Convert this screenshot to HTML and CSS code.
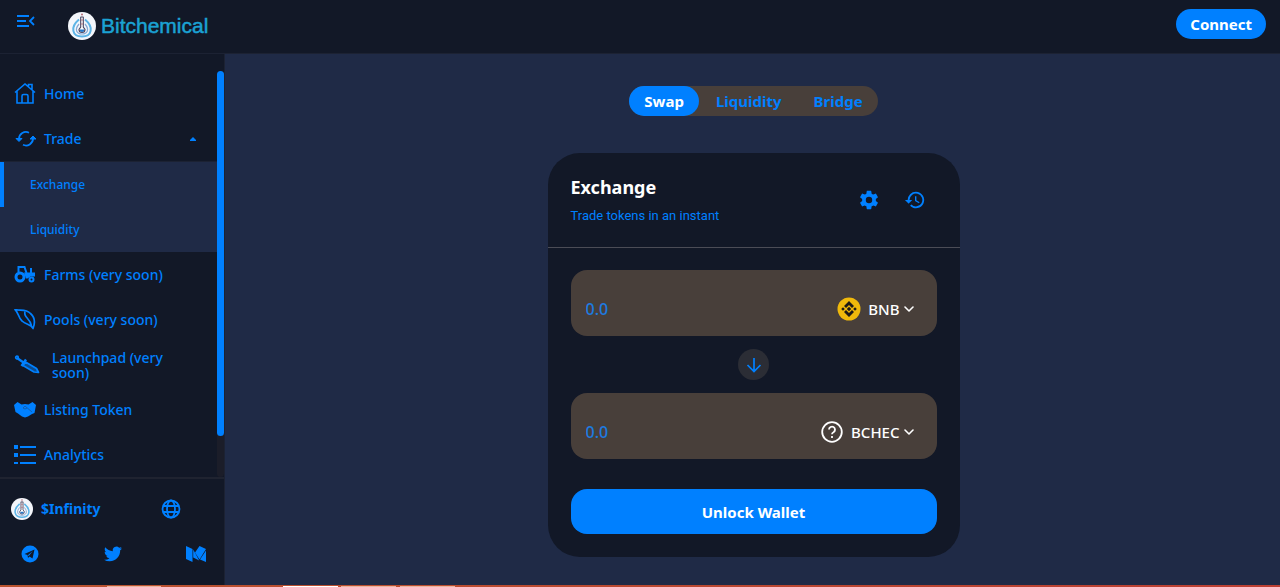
FILE: index.html
```html
<!DOCTYPE html>
<html lang="en">
<head>
  <meta charset="UTF-8" />
  <meta name="viewport" content="width=device-width, initial-scale=1.0" />
  <title>Bitchemical</title>
  <link rel="stylesheet" href="styles.css">
</head>

<body>
  <svg class="sprite" width="0" height="0" aria-hidden="true">
    <defs>
      <symbol id="flask" viewBox="0 0 28 28">
        <circle cx="14" cy="14" r="14" fill="#f4f6fb" />
        <path d="M11 7.500C2 15 4 24.500 14 24.500S26 15 17 7.500" fill="none" stroke="#5db4e6" stroke-width="2" />
        <path d="M11 12C6 18 9 22 14 22S22 18 17 12" fill="none" stroke="#86a9d4" stroke-width="1.200" />
        <path d="M12.500 5h3M12.700 5v10l-1.700 2.500q0 3 3 3t3-3L15.300 15V5" fill="#fff" stroke="#4a4560" stroke-width="1.100" />
        <path d="M12 17.500h4v1.500q-2 2-4 0z" fill="#2678c8" />
        <circle cx="14" cy="2.500" r="1" fill="#b66b77" />
        <circle cx="14" cy="8" r=".8" fill="#b66b77" />
        <circle cx="14" cy="12" r=".8" fill="#b66b77" />
      </symbol>
      <symbol id="chevron" viewBox="0 0 10 6">
        <path d="M1 1l4 4 4-4" fill="none" stroke="currentColor" stroke-width="1.600" stroke-linecap="round" stroke-linejoin="round" />
      </symbol>
    </defs>
  </svg>

  <header class="topbar">
    <button class="icon-btn menu-toggle" aria-label="Toggle menu">
      <svg width="18" height="14" viewBox="0 0 18 14" fill="none" stroke="currentColor" stroke-width="1.800">
        <path d="M0 2h12M0 7h9M0 12h12M17 3l-4 4 4 4" />
      </svg>
    </button>
    <a class="brand" href="#">
      <svg width="28" height="28"><use href="#flask" /></svg>
      <span>Bitchemical</span>
    </a>
    <button class="connect">Connect</button>
  </header>

  <div class="layout">
    <aside class="sidebar">
      <div class="menu-area">
        <nav class="menu">
          <a class="menu-item" href="#">
            <svg width="22" height="22" viewBox="0 0 22 22" fill="none" stroke="currentColor" stroke-width="1.600">
              <path d="M1 9.500L11 1l10 8.500M3 8v12h16V8M14.500 4V1.500h3.500V7M8 20v-7q0-1.500 1.500-1.500h3q1.500 0 1.500 1.500v7" />
            </svg>
            Home
          </a>
          <a class="menu-item" href="#">
            <svg width="22" height="22" viewBox="0 0 22 22" fill="none" stroke="currentColor" stroke-width="1.800">
              <path d="M5 11a7 7 0 0 1 10-6.300M19 10.500a7 7 0 0 1-10 6.300" />
              <path d="M2 10.500h6L5 13.500zM16 11h6l-3-3z" fill="currentColor" stroke-width="1" stroke-linejoin="round" />
            </svg>
            Trade
            <svg class="caret" width="6" height="4" viewBox="0 0 6 4"><path d="M0 4V3l3-3 3 3v1z" fill="currentColor" /></svg>
          </a>
          <div class="submenu">
            <a class="submenu-item active" href="#">Exchange</a>
            <a class="submenu-item" href="#">Liquidity</a>
          </div>
          <a class="menu-item" href="#">
            <svg width="22" height="22" viewBox="0 0 22 22" fill="none" stroke="currentColor">
              <circle cx="6" cy="13" r="4" stroke-width="3" />
              <circle cx="17.500" cy="15.500" r="2" stroke-width="2" />
              <path d="M4.500 8V3h6l2 6" stroke-width="2" />
              <path d="M10 8.500h11v4h-4.500l-3 2H12z" fill="currentColor" stroke="none" />
              <path d="M17 9V4" stroke-width="2" />
            </svg>
            Farms (very soon)
          </a>
          <a class="menu-item" href="#">
            <svg width="22" height="22" viewBox="0 0 22 22" fill="none" stroke="currentColor" stroke-width="1.700" stroke-linejoin="round">
              <path d="M1 0.500C6 2 12-.5 16.500 4.500c4.500 4 4.500 10 2.500 15C17 15 12 16 8 12 4 8.500 5 4 1 .500z" />
              <path d="M11 2.500c-2 6 5 6 6.500 14.500" />
            </svg>
            Pools (very soon)
          </a>
          <a class="menu-item wide" href="#">
            <svg width="26" height="22" viewBox="0 0 26 22" fill="none" stroke="currentColor" stroke-width="1.700" stroke-linejoin="round">
              <path d="M11.500 8l11 6.500 2 4-4.500-.5L9 11.500z" fill="currentColor" fill-opacity=".5" />
              <path d="M3 4l6.500 4.500M12 5.500L7.500 12" stroke-width="2.400" />
              <circle cx="3" cy="3.500" r="1.300" />
            </svg>
            <span>Launchpad (very soon)</span>
          </a>
          <a class="menu-item" href="#">
            <svg width="22" height="22" viewBox="0 0 22 22" fill="currentColor">
              <path d="M0 6L3.500 3l4 2.500L11 5l3.500.500 4-2.500L22 6l-1.500 8-2.500 1-4 2.500-3 1-3-1-4-3L1.500 13z" />
              <path d="M9 9l2-2 7 6M9 9q2 2 4 0" fill="none" stroke="#1b5291" stroke-width=".7" />
            </svg>
            Listing Token
          </a>
          <a class="menu-item" href="#">
            <svg width="22" height="22" viewBox="0 0 22 22" fill="currentColor">
              <path d="M0 1h4v4H0zM0 9h4v4H0zM0 18h4v2H0zM6 2h16v2H6zM6 10h16v2H6zM6 18h16v2H6z" />
            </svg>
            Analytics
          </a>
        </nav>
        <div class="scroll-track"><div class="scroll-thumb"></div></div>
      </div>

      <div class="sidebar-footer">
        <div class="token-row">
          <a class="token-price" href="#">
            <svg width="22" height="22"><use href="#flask" /></svg>
            $Infinity
          </a>
          <button class="icon-btn" aria-label="Language">
            <svg width="20" height="20" viewBox="0 0 20 20" fill="none" stroke="currentColor" stroke-width="1.800">
              <circle cx="10" cy="10" r="8.500" />
              <ellipse cx="10" cy="10" rx="4" ry="8.500" />
              <path d="M2 7h16M2 13h16" />
            </svg>
          </button>
        </div>
        <div class="social-row">
          <a href="#" aria-label="Telegram">
            <svg width="18" height="18" viewBox="0 0 18 18">
              <circle cx="9" cy="9" r="8.500" fill="currentColor" />
              <path d="M3.500 9L13.500 4.500l-2 9L8.500 11.500 7 13l-.5-3z" fill="#121827" />
              <path d="M6.800 10.200l5-4.200-4 5z" fill="currentColor" />
            </svg>
          </a>
          <a href="#" aria-label="Twitter">
            <svg width="18" height="18" viewBox="0 0 24 24" fill="currentColor">
              <path d="M23.950 4.570a10 10 0 0 1-2.820.770 4.960 4.960 0 0 0 2.160-2.720c-.950.550-2 .960-3.130 1.180a4.920 4.920 0 0 0-8.380 4.480C7.690 8.090 4.070 6.130 1.640 3.160a4.820 4.820 0 0 0-.670 2.480c0 1.710.870 3.210 2.190 4.100a4.900 4.900 0 0 1-2.230-.620v.060a4.920 4.920 0 0 0 3.950 4.830 5 5 0 0 1-2.210.080 4.940 4.940 0 0 0 4.600 3.420A9.870 9.870 0 0 1 0 19.540a14 14 0 0 0 7.550 2.210c9.050 0 14-7.500 14-13.980 0-.210 0-.420-.020-.630A9.940 9.940 0 0 0 24 4.590z" />
            </svg>
          </a>
          <a href="#" aria-label="Medium">
            <svg width="20" height="18" viewBox="0 0 20 18" fill="currentColor">
              <path d="M0 1l6.500 3v13L0 14zM13.500 1L20 4l-6.500 10.500L9 7.500zM7.200 4.500l6 11-6-3zM20 5.500V17l-6-2.500z" />
            </svg>
          </a>
        </div>
      </div>
    </aside>

    <main class="content">
      <nav class="tabs">
        <a class="tab active" href="#">Swap</a>
        <a class="tab" href="#">Liquidity</a>
        <a class="tab" href="#">Bridge</a>
      </nav>

      <section class="card">
        <div class="card-header">
          <div class="card-heading">
            <h1>Exchange</h1>
            <p>Trade tokens in an instant</p>
          </div>
          <button class="icon-btn" aria-label="Settings">
            <svg width="22" height="22" viewBox="0 0 24 24" fill="currentColor">
              <path d="M19.430 12.980c.040-.320.070-.640.070-.980s-.030-.660-.070-.980l2.110-1.650c.190-.150.240-.420.120-.640l-2-3.460c-.120-.220-.390-.300-.610-.220l-2.490 1c-.520-.400-1.080-.730-1.690-.980l-.380-2.650A.49.49 0 0 0 14 2h-4c-.250 0-.460.180-.490.420l-.380 2.650c-.610.250-1.170.590-1.690.980l-2.490-1c-.230-.090-.490 0-.610.220l-2 3.460c-.130.220-.070.490.120.640l2.110 1.650c-.040.320-.070.650-.070.980s.030.660.070.980l-2.110 1.650c-.190.150-.240.420-.120.640l2 3.460c.120.220.390.300.610.220l2.490-1c.520.400 1.080.730 1.690.980l.380 2.650c.030.240.240.420.490.420h4c.250 0 .460-.180.490-.420l.380-2.650c.610-.250 1.170-.590 1.690-.980l2.490 1c.230.090.490 0 .610-.220l2-3.460c.120-.220.070-.490-.120-.640zM12 15.500a3.500 3.500 0 1 1 0-7 3.500 3.500 0 0 1 0 7z" />
            </svg>
          </button>
          <button class="icon-btn" aria-label="Recent transactions">
            <svg width="22" height="22" viewBox="0 0 24 24" fill="currentColor">
              <path d="M13 3a9 9 0 0 0-9 9H1l3.890 3.890.070.140L9 12H6a7 7 0 1 1 2.060 4.940l-1.420 1.420A9 9 0 1 0 13 3zm-1 5v5l4.280 2.540.720-1.210-3.500-2.080V8z" />
            </svg>
          </button>
        </div>

        <div class="card-body">
          <div class="amount-box">
            <input type="text" placeholder="0.0" aria-label="From amount">
            <button class="token-select">
              <svg class="token-logo" width="24" height="24" viewBox="0 0 24 24">
                <circle cx="12" cy="12" r="11.500" fill="#f0b90b" />
                <path d="M12 4L17 9l-2 2-3-3-3 3-2-2zM12 20L7 15l2-2 3 3 3-3 2 2zM12 9.800l2.200 2.200-2.200 2.200L9.800 12zM6 10.200L7.800 12 6 13.800 4.200 12zM18 10.200l1.800 1.800-1.800 1.800-1.800-1.800z" fill="#1e1a16" />
              </svg>
              BNB
              <svg width="10" height="6"><use href="#chevron" /></svg>
            </button>
          </div>

          <button class="switch" aria-label="Switch tokens">
            <svg width="16" height="16" viewBox="0 0 16 16" fill="none" stroke="currentColor" stroke-width="1.700">
              <path d="M8 1v13M1.500 8L8 14.500 14.500 8" />
            </svg>
          </button>

          <div class="amount-box">
            <input type="text" placeholder="0.0" aria-label="To amount">
            <button class="token-select">
              <svg class="token-logo" width="24" height="24" viewBox="0 0 24 24" fill="none" stroke="currentColor" stroke-width="1.800">
                <circle cx="12" cy="12" r="9.800" />
                <path d="M9 9.500a3 3 0 1 1 4.500 2.700Q12 13 12 14.300" />
                <path d="M12 16v2" />
              </svg>
              BCHEC
              <svg width="10" height="6"><use href="#chevron" /></svg>
            </button>
          </div>

          <button class="unlock">Unlock Wallet</button>
        </div>
      </section>
    </main>
  </div>

  <div class="bottom-strip"></div>
</body>
</html>
```
FILE: styles.css
```css
* {
  box-sizing: border-box;
}

body {
  margin: 0;
  min-height: 100vh;
  display: flex;
  flex-direction: column;
  background: #1f2a46;
  color: #0080ff;
  font-family: "Noto Sans", sans-serif;
  font-size: 14px;
}

a {
  color: inherit;
  text-decoration: none;
}

button,
input {
  font: inherit;
  color: inherit;
  border: none;
  background: none;
  padding: 0;
}

button {
  cursor: pointer;
}

svg {
  display: block;
  flex-shrink: 0;
}

.sprite {
  position: absolute;
}

.icon-btn {
  display: flex;
}

/* top bar */
.topbar {
  display: flex;
  align-items: center;
  height: 54px;
  padding: 0 14px 5px 17px;
  background: #121827;
  border-bottom: 1px solid #1c2233;
}

.menu-toggle {
  padding-bottom: 6px;
}

.brand {
  display: flex;
  align-items: center;
  gap: 5px;
  margin: 4px auto 0 33px;
  color: #1ba2d3;
  font-family: "Liberation Sans", sans-serif;
  font-size: 21px;
  -webkit-text-stroke: 0.5px;
}

.connect {
  height: 30px;
  padding: 0 14px;
  border-radius: 16px;
  background: #0080ff;
  color: #fff;
  font-size: 15px;
  font-weight: 700;
}

/* sidebar */
.layout {
  flex: 1;
  display: flex;
}

.sidebar {
  width: 225px;
  flex-shrink: 0;
  display: flex;
  flex-direction: column;
  background: #121827;
  border-right: 1px solid #1c2233;
}

.menu-area {
  flex: 1;
  display: flex;
  padding-top: 17px;
}

.menu {
  flex: 1;
}

.menu-item {
  display: flex;
  align-items: center;
  gap: 8px;
  height: 45px;
  padding: 0 24px 0 14px;
  font-weight: 500;
  line-height: 15px;
}

.menu-item.wide {
  gap: 12px;
}

.caret {
  margin-left: auto;
  margin-right: -3px;
}

.submenu {
  background: #1f2a46;
  border-top: 1px solid #1c2233;
}

.submenu-item {
  display: flex;
  align-items: center;
  height: 45px;
  padding-left: 26px;
  border-left: 4px solid transparent;
  font-size: 12px;
  font-weight: 500;
}

.submenu-item.active {
  border-left-color: #0080ff;
}

.scroll-track {
  width: 7px;
  background: #1b1d29;
  border-radius: 4px;
}

.scroll-thumb {
  height: 90%;
  border-radius: 4px;
  background: #0080ff;
}

.sidebar-footer {
  padding: 7px 18px 9px 11px;
  border-top: 2px solid #1f2330;
}

.token-row,
.social-row {
  display: flex;
  align-items: center;
  justify-content: space-between;
  height: 45px;
}

.token-row {
  padding-right: 25px;
}

.social-row {
  padding-left: 10px;
}

.token-price {
  display: flex;
  align-items: center;
  gap: 8px;
  font-weight: 700;
}

/* swap page */
.content {
  flex: 1;
  display: flex;
  flex-direction: column;
  align-items: center;
  padding: 32px 16px 28px 18px;
}

.tabs {
  display: flex;
  gap: 2px;
  margin-bottom: 37px;
  border-radius: 16px;
  background: #483f3a;
}

.tab {
  padding: 0 15px;
  border-radius: 16px;
  font-size: 15px;
  font-weight: 700;
  line-height: 30px;
}

.tab.active {
  background: #0080ff;
  color: #fff;
}

.card {
  width: 100%;
  max-width: 412px;
  border-radius: 32px;
  background: #121827;
}

.card-header {
  display: flex;
  align-items: center;
  gap: 24px;
  padding: 20px 34px 20px 23px;
  border-bottom: 1px solid #4b4c56;
}

.card-heading {
  flex: 1;
}

.card-heading h1 {
  margin: 0 0 4px;
  color: #fff;
  font-size: 18px;
  line-height: 28px;
}

.card-heading p {
  margin: 0;
  font-family: Roboto, sans-serif;
  font-size: 13px;
  line-height: 22px;
}

.card-body {
  display: flex;
  flex-direction: column;
  align-items: center;
  padding: 22px 23px 23px;
}

.amount-box {
  display: flex;
  align-items: center;
  width: 100%;
  height: 66px;
  padding: 12px 23px 0 15px;
  border-radius: 16px;
  background: #483f3a;
}

.amount-box input {
  flex: 1;
  min-width: 0;
  font-size: 16px;
  font-weight: 500;
  outline: none;
}

.amount-box input::placeholder {
  color: #1d7be0;
}

.token-select {
  display: flex;
  align-items: center;
  gap: 4px;
  color: #fff;
  font-size: 15px;
  font-weight: 500;
}

.token-logo {
  margin-right: 3px;
}

.switch {
  display: flex;
  align-items: center;
  justify-content: center;
  width: 31px;
  height: 31px;
  margin: 13px 0;
  border-radius: 50%;
  background: #2b2d35;
}

.unlock {
  width: 100%;
  height: 45px;
  margin-top: 30px;
  border-radius: 16px;
  background: #0080ff;
  color: #fff;
  font-size: 15px;
  font-weight: 700;
}

/* thin strip along the bottom edge */
.bottom-strip {
  height: 2px;
  background:
    linear-gradient(#e8b49c, #e8b49c) 107px 1px / 54px 1px no-repeat,
    linear-gradient(#fff, #fff) 283px 1px / 55px 1px no-repeat,
    linear-gradient(#e8b49c, #e8b49c) 341px 1px / 55px 1px no-repeat,
    linear-gradient(#e8b49c, #e8b49c) 400px 1px / 55px 1px no-repeat,
    linear-gradient(90deg, #b9532f, #bb3f33);
}
```
